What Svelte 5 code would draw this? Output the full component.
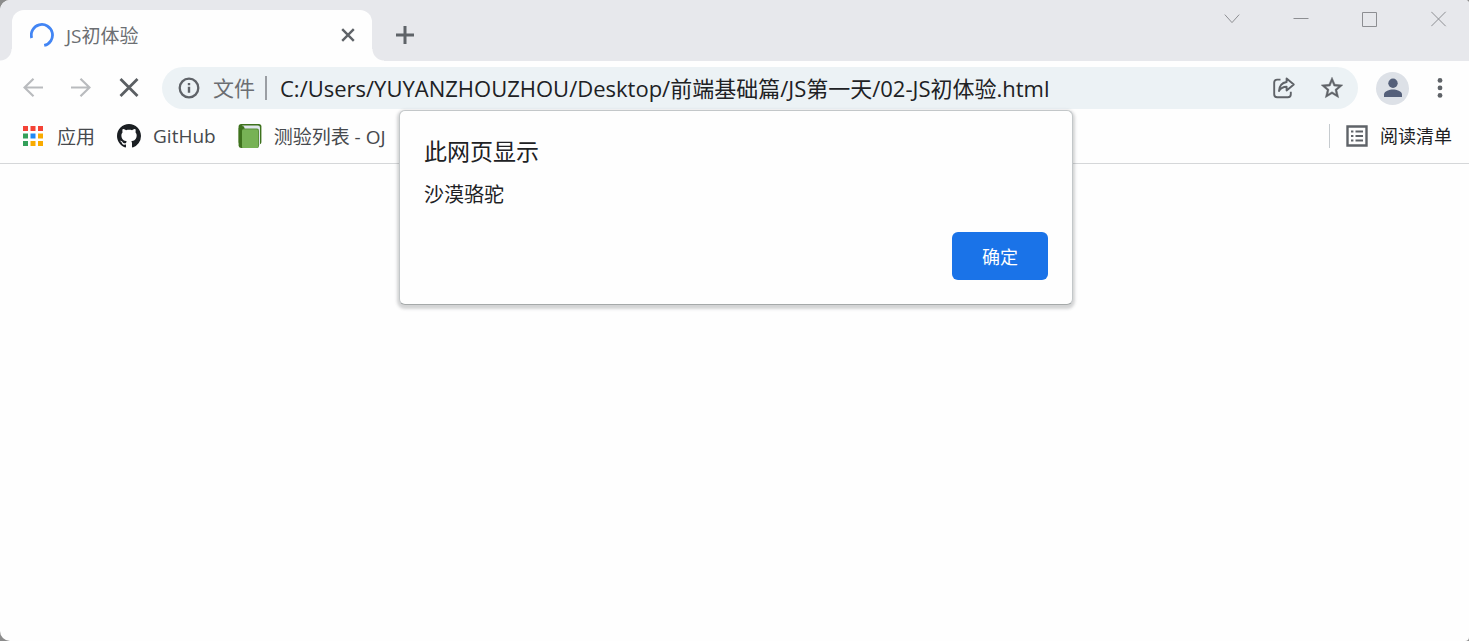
<script>
    let tabTitle = "JS初体验";
    let address = "C:/Users/YUYANZHOUZHOU/Desktop/前端基础篇/JS第一天/02-JS初体验.html";
    let showAlert = true;

    const appColors = [
        "#f44336", "#f44336", "#f44336",
        "#34a05a", "#1e88f5", "#f9ab00",
        "#34a05a", "#f9ab00", "#f9ab00"
    ];
</script>

<div class="window">
    <header class="titlebar">
        <div class="tab">
            <svg class="spinner" viewBox="0 0 24 24" width="24" height="24">
                <path d="M1.700 15A10.600 10.600 0 1 1 14.200 22.400" fill="none" stroke="#4285f4" stroke-width="2.800" />
            </svg>
            <span class="tab-title">{tabTitle}</span>
            <button class="icon-button small" aria-label="关闭标签页">
                <svg viewBox="0 0 14 14" width="14" height="14" stroke="#5f6368" stroke-width="2.4">
                    <path d="M1.2 1.2l11.6 11.6M12.8 1.2L1.2 12.8" />
                </svg>
            </button>
        </div>
        <button class="icon-button new-tab" aria-label="新标签页">
            <svg viewBox="0 0 18 18" width="18" height="18" stroke="#5f6368" stroke-width="3">
                <path d="M9 0v18M0 9h18" />
            </svg>
        </button>
        <div class="window-controls">
            <button class="icon-button small" aria-label="搜索标签页">
                <svg viewBox="0 0 16 16" width="16" height="16"><path d="M.8 3.6L8 11.6l7.2-8" /></svg>
            </button>
            <button class="icon-button small" aria-label="最小化">
                <svg viewBox="0 0 16 16" width="16" height="16"><path d="M.5 7.5h15" /></svg>
            </button>
            <button class="icon-button small" aria-label="最大化">
                <svg viewBox="0 0 16 16" width="16" height="16"><path d="M.5 1.5h14v14h-14z" /></svg>
            </button>
            <button class="icon-button small" aria-label="关闭">
                <svg viewBox="0 0 16 16" width="16" height="16"><path d="M.3 .8l14.400 14.400M14.700 .8L.3 15.200" /></svg>
            </button>
        </div>
    </header>

    <nav class="toolbar">
        <button class="icon-button nav" aria-label="后退">
            <svg viewBox="0 0 20 20" width="20" height="20" stroke="#b9bbbe" stroke-width="2.2">
                <path d="M20 9.5H1.5M10.5 .8L1.5 9.5l9 8.7" />
            </svg>
        </button>
        <button class="icon-button nav" aria-label="前进">
            <svg viewBox="0 0 20 20" width="20" height="20" stroke="#b9bbbe" stroke-width="2.2">
                <path d="M0 9.5h18.5M9.5 .8l9 8.7-9 8.7" />
            </svg>
        </button>
        <button class="icon-button nav" aria-label="停止加载">
            <svg viewBox="0 0 20 20" width="20" height="20" stroke="#5b5f63" stroke-width="2.800">
                <path d="M1.5 1l17 17M18.5 1l-17 17" />
            </svg>
        </button>

        <div class="omnibox">
            <svg viewBox="0 0 22 22" width="22" height="22">
                <circle cx="11" cy="11" r="9.3" fill="none" stroke="#5f6368" stroke-width="2.3" />
                <path d="M11 6v2.2M11 9.8v6" stroke="#5f6368" stroke-width="2.4" />
            </svg>
            <label class="scheme" for="address">文件</label>
            <input id="address" class="address" type="text" spellcheck="false" bind:value={address} />
            <button class="icon-button small" aria-label="分享">
                <svg viewBox="0 0 24 24" width="24" height="24" stroke="#5f6368" stroke-width="1.9" stroke-linejoin="round">
                    <path d="M8.5 3.600H5.2a3 3 0 0 0-3 3v11.600a3 3 0 0 0 3 3h10.600a3 3 0 0 0 3-3v-2.400" />
                    <path d="M14.6 2.400l7.200 6-7.200 6v-3.600c-3.600 0-5.800 1.200-7.600 4.200.3-5 2.800-8.200 7.600-9z" />
                </svg>
            </button>
            <button class="icon-button small" aria-label="为此标签页添加书签">
                <svg viewBox="0 0 24 24" width="26" height="26">
                    <path class="star" d="M22 9.24l-7.19-.62L12 2 9.19 8.63 2 9.24l5.46 4.73L5.82 21 12 17.27 18.18 21l-1.63-7.03L22 9.24zM12 15.4l-3.76 2.27 1-4.28-3.32-2.88 4.38-.38L12 6.1l1.71 4.04 4.38.38-3.32 2.88 1 4.28L12 15.4z" />
                </svg>
            </button>
        </div>

        <button class="icon-button avatar" aria-label="个人资料">
            <svg viewBox="0 0 20 20" width="20" height="20">
                <circle cx="10" cy="5.2" r="4.7" />
                <path d="M1 19v-2.6c0-3.2 5.6-4.8 9-4.8s9 1.6 9 4.8V19z" />
            </svg>
        </button>
        <button class="icon-button small" aria-label="更多">
            <svg viewBox="0 0 6 20" width="6" height="20" fill="#5f6368">
                <circle cx="3" cy="2.4" r="2.4" />
                <circle cx="3" cy="9.9" r="2.4" />
                <circle cx="3" cy="17.4" r="2.4" />
            </svg>
        </button>
    </nav>

    <div class="bookmarks">
        <a class="bookmark" href="#apps">
            <svg viewBox="0 0 22 20" width="22" height="20">
                {#each appColors as color, i}
                    <rect x={(i % 3) * 7.5} y={Math.floor(i / 3) * 7.5} width="5" height="5" fill={color} />
                {/each}
            </svg>
            <span>应用</span>
        </a>
        <a class="bookmark" href="#github">
            <svg viewBox="0 0 16 16" width="24" height="24" fill="#1b1f23">
                <path d="M8 0C3.58 0 0 3.58 0 8c0 3.54 2.29 6.53 5.47 7.59.4.07.55-.17.55-.38 0-.19-.01-.82-.01-1.49-2.01.37-2.53-.49-2.69-.94-.09-.23-.48-.94-.82-1.13-.28-.15-.68-.52-.01-.53.63-.01 1.08.58 1.23.82.72 1.21 1.87.87 2.33.66.07-.52.28-.87.51-1.07-1.78-.2-3.64-.89-3.64-3.95 0-.87.31-1.59.82-2.15-.08-.2-.36-1.02.08-2.12 0 0 .67-.21 2.2.82.64-.18 1.32-.27 2-.27.68 0 1.36.09 2 .27 1.53-1.04 2.2-.82 2.2-.82.44 1.1.16 1.92.08 2.12.51.56.82 1.27.82 2.15 0 3.07-1.87 3.75-3.65 3.95.29.25.54.73.54 1.48 0 1.07-.01 1.93-.01 2.2 0 .21.15.46.55.38A8.01 8.01 0 0 0 16 8c0-4.42-3.58-8-8-8z" />
            </svg>
            <span>GitHub</span>
        </a>
        <a class="bookmark" href="#oj">
            <svg viewBox="0 0 24 24" width="24" height="24">
                <rect x=".6" width="22.8" height="20.4" rx="2.6" fill="#3e721d" />
                <rect x="3" y="1.5" width="19" height="20.5" rx="2" fill="#dfe6ea" />
                <rect x=".6" y="2" width="6" height="22" rx="2.4" fill="#3e721d" />
                <rect x="4" y="4.6" width="17" height="19.4" rx="2" fill="#5c913b" />
                <rect x="4" y="5.4" width="16" height="18.600" rx="1.6" fill="#77b255" />
            </svg>
            <span>测验列表 - OJ</span>
        </a>
        <a class="bookmark reading-list" href="#reading-list">
            <svg viewBox="0 0 22 22" width="22" height="22">
                <path d="M1.5 1.5h19v19h-19z" fill="none" stroke="#5f6368" stroke-width="2.4" />
                <path d="M5 6.5h2.4M5 11h2.4M5 15.5h2.4M9.5 6.5H17M9.5 11H17M9.5 15.5H17" stroke="#5f6368" stroke-width="2.2" />
            </svg>
            <span>阅读清单</span>
        </a>
    </div>

    {#if showAlert}
        <div class="overlay">
            <div class="dialog" role="alertdialog" aria-labelledby="alert-title" aria-describedby="alert-message">
                <h1 id="alert-title">此网页显示</h1>
                <p id="alert-message">沙漠骆驼</p>
                <button class="confirm" on:click={() => showAlert = false}>确定</button>
            </div>
        </div>
    {/if}
</div>

<style>
    :global(body) {
        background: #8c8c8c;
    }

    .window {
        position: relative;
        min-height: 100vh;
        border-radius: 10px 4px 4px 10px;
        overflow: hidden;
        background: #fefefe;
        color: #202124;
        font-family: "Open Sans", "Noto Sans CJK SC", sans-serif;
        font-size: 19px;
    }

    .titlebar {
        display: flex;
        align-items: flex-start;
        background: #e7e8ec;
        padding: 0 18px 0 12px;
    }

    .tab {
        position: relative;
        display: flex;
        align-items: center;
        box-sizing: border-box;
        width: 360px;
        height: 51px;
        margin-top: 10px;
        padding: 0 12px 2px 18px;
        border-radius: 12px 12px 0 0;
        background: #fefefe;
    }

    /* curved feet on both sides of the active tab */
    .tab::before,
    .tab::after {
        content: "";
        position: absolute;
        bottom: 0;
        width: 12px;
        height: 12px;
    }

    .tab::before {
        left: -12px;
        background: radial-gradient(circle at 0 0, transparent 11px, #fefefe 12px);
    }

    .tab::after {
        right: -12px;
        background: radial-gradient(circle at 100% 0, transparent 11px, #fefefe 12px);
    }

    .tab-title {
        flex: 1;
        margin-left: 12px;
        color: #6b6e72;
    }

    .icon-button {
        display: flex;
        align-items: center;
        justify-content: center;
        padding: 0;
        border: none;
        background: transparent;
        cursor: pointer;
    }

    .icon-button svg {
        flex: none;
    }

    .icon-button path {
        fill: none;
    }

    .small {
        width: 24px;
        height: 38px;
    }

    .new-tab {
        width: 42px;
        height: 42px;
        margin: 14px 0 0 12px;
    }

    .window-controls {
        display: flex;
        gap: 45px;
        margin-left: auto;
    }

    .window-controls svg {
        stroke: #8d8e92;
        stroke-width: 1;
    }

    .toolbar {
        display: flex;
        align-items: center;
        padding: 6px 17px 0 9px;
    }

    .nav {
        width: 48px;
        height: 40px;
    }

    .omnibox {
        display: flex;
        flex: 1;
        align-items: center;
        height: 42px;
        margin: 0 18px 0 9px;
        padding: 0 14px 0 16px;
        border-radius: 21px;
        background: #ecf2f5;
    }

    .omnibox .icon-button {
        margin-left: 24px;
    }

    .omnibox .star {
        fill: #5f6368;
        stroke: #5f6368;
        stroke-width: 0.4;
    }

    .scheme {
        margin-left: 13px;
        padding-right: 10px;
        border-right: 2px solid #9a9ea3;
        color: #6b6e72;
        font-size: 21px;
        line-height: 24px;
    }

    .address {
        flex: 1;
        min-width: 0;
        padding: 0 0 2px;
        margin-left: 13px;
        border: none;
        outline: none;
        background: transparent;
        color: #202124;
        font-family: inherit;
        font-size: 22px;
    }

    .avatar {
        width: 33px;
        height: 33px;
        margin-right: 19px;
        border-radius: 50%;
        background: #dde1e7;
    }

    .avatar circle,
    .avatar path {
        fill: #55607a;
    }

    .bookmarks {
        display: flex;
        align-items: center;
        gap: 22px;
        height: 54px;
        padding: 0 17px 0 23px;
        border-bottom: 1px solid #d5d7d9;
    }

    .bookmark {
        display: flex;
        align-items: center;
        gap: 12px;
        color: #46494d;
        text-decoration: none;
        white-space: nowrap;
    }

    .reading-list {
        margin-left: auto;
        padding-left: 16px;
        border-left: 1px solid #c6cbcf;
        color: #202124;
        font-size: 18px;
        line-height: 24px;
    }

    .overlay {
        position: absolute;
        top: 110px;
        left: 3px;
        right: 0;
        display: flex;
        justify-content: center;
    }

    .dialog {
        display: flex;
        flex-direction: column;
        box-sizing: border-box;
        width: 100%;
        max-width: 674px;
        padding: 23px 24px 24px;
        border: 1px solid #c3c7c9;
        border-bottom-color: #a5a9a9;
        border-radius: 6px;
        background: #fefefe;
        box-shadow: 0 2px 3px 2px rgba(60, 64, 67, 0.22);
    }

    h1 {
        margin: 0;
        font-size: 23px;
        font-weight: 400;
        line-height: 34px;
    }

    p {
        margin: 12px 0 22px;
        font-size: 20px;
        line-height: 30px;
    }

    .confirm {
        align-self: flex-end;
        width: 96px;
        height: 48px;
        border: none;
        border-radius: 6px;
        background: #1a73e8;
        color: #fff;
        font-family: inherit;
        font-size: 18px;
        cursor: pointer;
    }
</style>
